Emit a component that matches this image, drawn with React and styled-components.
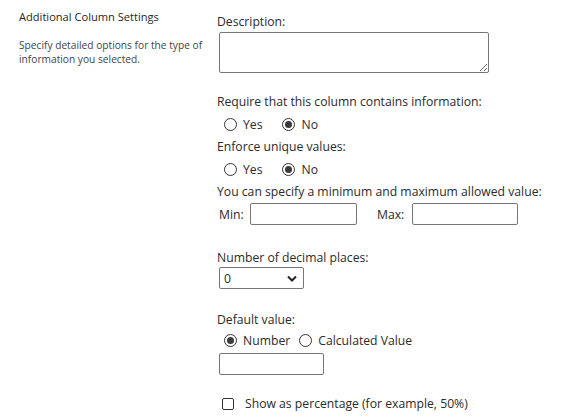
import styled, { createGlobalStyle } from "styled-components";

const GlobalStyle = createGlobalStyle`
  body {
    margin: 0;
    background: #ffffff;
    font-family: "Open Sans", "Liberation Sans", sans-serif;
    color: #2b2b2b;
  }
`;

const Page = styled.div`
  display: flex;
  width: 562px;
  height: 420px;
  overflow: hidden;
`;

const Side = styled.div`
  width: 217px;
  flex-shrink: 0;
  padding: 8px 12px 0 19px;
  box-sizing: border-box;
`;

const SideTitle = styled.div`
  font-size: 11.1px;
  line-height: 18px;
  color: #262626;
`;

const SideText = styled.div`
  margin-top: 12px;
  font-size: 10.2px;
  line-height: 14px;
  color: #444444;
`;

const Main = styled.div`
  flex: 1;
  padding-top: 14px;
  font-size: 12.2px;
`;

const Label = styled.div`
  line-height: 16px;
  margin-top: ${(p) => p.$top || 0}px;
`;

const TextArea = styled.textarea`
  display: block;
  margin: 2px 0 0 2px;
  width: 270px;
  height: 41px;
  box-sizing: border-box;
  border: 1px solid #767676;
  border-radius: 2px;
  font: inherit;
  resize: both;
`;

const OptionRow = styled.div`
  display: flex;
  align-items: center;
  height: ${(p) => p.$height || 29}px;
  padding-left: 7px;
  gap: ${(p) => p.$gap}px;
`;

const Option = styled.label`
  display: flex;
  align-items: center;
  gap: 6px;
`;

const Radio = styled.span`
  width: 13px;
  height: 13px;
  box-sizing: border-box;
  border: 1px solid #333333;
  border-radius: 50%;
  display: flex;
  align-items: center;
  justify-content: center;
  &::after {
    content: "";
    width: 7px;
    height: 7px;
    border-radius: 50%;
    background: ${(p) => (p.$checked ? "#3b3b3b" : "transparent")};
  }
`;

const RangeRow = styled.div`
  display: flex;
  align-items: center;
  margin: 3px 0 0 2px;
`;

const RangeLabel = styled.span`
  width: ${(p) => p.$w}px;
  margin-left: ${(p) => p.$left || 0}px;
`;

const Input = styled.input`
  width: ${(p) => p.$w}px;
  height: 22px;
  box-sizing: border-box;
  border: 1px solid #767676;
  border-radius: 2px;
  margin: ${(p) => p.$margin || 0};
  font: inherit;
  display: block;
`;

const SelectBox = styled.div`
  position: relative;
  margin: 1px 0 0 2px;
  width: 85px;
  height: 22px;
  box-sizing: border-box;
  border: 1px solid #767676;
  border-radius: 2px;
  display: flex;
  align-items: center;
  padding-left: 4px;
`;

const Chevron = styled.svg`
  position: absolute;
  right: 6px;
  top: 7px;
`;

const CheckRow = styled.label`
  display: flex;
  align-items: center;
  gap: 11px;
  margin-top: 20px;
  padding-left: 5px;
`;

const Box = styled.span`
  width: 12px;
  height: 12px;
  box-sizing: border-box;
  border: 1px solid #333333;
  border-radius: 2px;
`;

export default function App() {
  return (
    <Page>
      <GlobalStyle />
      <Side>
        <SideTitle>Additional Column Settings</SideTitle>
        <SideText>
          Specify detailed options for the type of information you selected.
        </SideText>
      </Side>
      <Main>
        <Label>Description:</Label>
        <TextArea />
        <Label $top={21}>Require that this column contains information:</Label>
        <OptionRow $gap={20}>
          <Option>
            <Radio />
            Yes
          </Option>
          <Option>
            <Radio $checked />
            No
          </Option>
        </OptionRow>
        <Label>Enforce unique values:</Label>
        <OptionRow $gap={20}>
          <Option>
            <Radio />
            Yes
          </Option>
          <Option>
            <Radio $checked />
            No
          </Option>
        </OptionRow>
        <Label>You can specify a minimum and maximum allowed value:</Label>
        <RangeRow>
          <RangeLabel $w={31}>Min:</RangeLabel>
          <Input $w={107} />
          <RangeLabel $w={35} $left={20}>
            Max:
          </RangeLabel>
          <Input $w={106} />
        </RangeRow>
        <Label $top={25}>Number of decimal places:</Label>
        <SelectBox>
          0
          <Chevron width="10" height="7" viewBox="0 0 10 7">
            <path d="M1 1.5 L5 5.5 L9 1.5" fill="none" stroke="#222" strokeWidth="2" />
          </Chevron>
        </SelectBox>
        <Label $top={23}>Default value:</Label>
        <OptionRow $gap={9} $height={24}>
          <Option>
            <Radio $checked />
            Number
          </Option>
          <Option>
            <Radio />
            Calculated Value
          </Option>
        </OptionRow>
        <Input $w={105} $margin="1px 0 0 2px" />
        <CheckRow>
          <Box />
          Show as percentage (for example, 50%)
        </CheckRow>
      </Main>
    </Page>
  );
}
